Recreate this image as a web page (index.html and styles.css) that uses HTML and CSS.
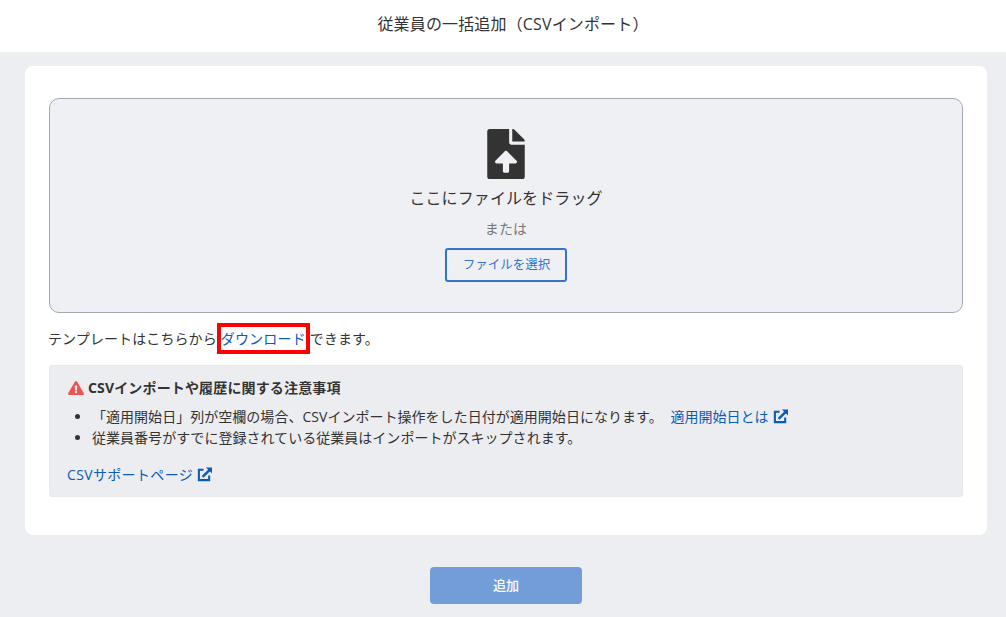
FILE: index.html
```html
<!DOCTYPE html>
<html lang="ja">
<head>
<meta charset="utf-8">
<title>従業員の一括追加（CSVインポート）</title>
<link rel="stylesheet" href="styles.css">
</head>
<body>
<header class="page-header">従業員の一括追加（CSVインポート）</header>
<main class="card">
  <section class="dropzone">
    <svg class="file-icon" viewBox="0 0 384 512" aria-hidden="true"><path fill="#333" d="M224 136V0H24C10.700 0 0 10.700 0 24v464c0 13.300 10.700 24 24 24h336c13.300 0 24-10.700 24-24V160H248c-13.200 0-24-10.800-24-24zm65.180 216.010H224v80c0 8.840-7.160 16-16 16h-32c-8.840 0-16-7.160-16-16v-80H94.820c-14.280 0-21.410-17.290-11.270-27.360l96.420-95.700c6.650-6.610 17.390-6.610 24.040 0l96.420 95.700c10.150 10.070 3.030 27.360-11.250 27.360zM377 105L279.100 7c-4.500-4.500-10.600-7-17-7H256v128h128v-6.100c0-6.300-2.500-12.400-7-16.900z"/></svg>
    <p class="drop-title">ここにファイルをドラッグ</p>
    <p class="drop-or">または</p>
    <button class="select-btn" type="button">ファイルを選択</button>
  </section>
  <p class="template-line">テンプレートはこちらから<a class="link marked" href="#">ダウンロード</a>できます。</p>
  <section class="notice">
    <h2 class="notice-title">
      <svg class="warn-icon" viewBox="0 0 576 512" aria-hidden="true"><path fill="#ef5350" d="M569.500 440L329.400 24c-18.400-32-64.400-32-82.800 0L6.500 440c-18.400 31.900 4.600 72 41.400 72h480.200c36.800 0 59.800-40.100 41.400-72zM288 354c25.400 0 46 20.600 46 46s-20.600 46-46 46-46-20.600-46-46 20.600-46 46-46zm-43.700-165.300c-.7-13.700 10.200-25.300 24-25.300h39.400c13.800 0 24.700 11.600 24 25.300l-7.400 136c-.7 12.700-11.200 22.700-24 22.700h-24.600c-12.800 0-23.300-10-24-22.700z"/></svg>
      CSVインポートや履歴に関する注意事項
    </h2>
    <ul class="notice-list">
      <li>「適用開始日」列が空欄の場合、CSVインポート操作をした日付が適用開始日になります。 <a class="link gap" href="#">適用開始日とは<svg class="ext-icon" viewBox="0 0 16 16" aria-hidden="true"><path fill="none" stroke="currentColor" stroke-width="2.200" d="M7 3H2v11h11V9"/><path fill="none" stroke="currentColor" stroke-width="2.600" d="M6 10.500 14 2.500"/><path fill="currentColor" d="M9.500 0.500H16V7z"/></svg></a></li>
      <li>従業員番号がすでに登録されている従業員はインポートがスキップされます。</li>
    </ul>
    <a class="link support" href="#">CSVサポートページ<svg class="ext-icon" viewBox="0 0 16 16" aria-hidden="true"><path fill="none" stroke="currentColor" stroke-width="2.200" d="M7 3H2v11h11V9"/><path fill="none" stroke="currentColor" stroke-width="2.600" d="M6 10.500 14 2.500"/><path fill="currentColor" d="M9.500 0.500H16V7z"/></svg></a>
  </section>
</main>
<div class="actions"><button class="add-btn" type="button">追加</button></div>
</body>
</html>
```
FILE: styles.css
```css
* { box-sizing: border-box; }
html, body { height: 100%; }
body {
  margin: 0;
  background: #edeef2;
  color: #333;
  font-family: "Open Sans", "Noto Sans CJK JP", sans-serif;
  font-size: 14px;
  line-height: 21px;
  overflow: hidden;
}
.page-header {
  height: 52px;
  background: #fff;
  display: flex;
  align-items: center;
  justify-content: center;
  font-size: 16px;
  letter-spacing: 0.15px;
  padding: 0 0 4px 20px;
}
.card {
  width: 962px;
  height: 469px;
  margin: 14px 0 0 25px;
  padding: 32px 24px 0;
  background: #fff;
  border-radius: 8px;
}
.dropzone {
  height: 215px;
  background: #eff0f4;
  border: 1px solid #a4a8b4;
  border-radius: 10px;
  display: flex;
  flex-direction: column;
  align-items: center;
  padding-top: 30px;
}
.file-icon { width: 38px; height: 50px; display: block; }
.drop-title { margin: 7px 0 0; font-size: 16px; line-height: 24px; letter-spacing: 0.1px; }
.drop-or { margin: 9px 0 0; color: #777; line-height: 20px; letter-spacing: 0.2px; }
.select-btn {
  width: 122px;
  height: 34px;
  margin-top: 9px;
  background: transparent;
  border: 2px solid #3273cd;
  border-radius: 3px;
  color: #3273cd;
  font: inherit;
  font-size: 12.5px;
  padding: 0 0 2px 1px;
}
.template-line {
  margin: 10px 0 0 -1px;
  display: flex;
  align-items: center;
  height: 31px;
  letter-spacing: 0.1px;
  white-space: nowrap;
}
.link { color: #0b5cb5; text-decoration: none; }
.marked {
  display: flex;
  align-items: center;
  justify-content: center;
  width: 93px;
  height: 31px;
  border: 4px solid #f00;
  letter-spacing: 0.2px;
}
.notice {
  height: 132px;
  margin-top: 11px;
  padding: 11px 17px 0;
  background: #ecedf0;
  border: 1px solid #e8e9ec;
  border-radius: 3px;
}
.notice-title {
  margin: 0;
  font-size: 14px;
  line-height: 21px;
  font-weight: 700;
  letter-spacing: 0.15px;
  display: flex;
  align-items: center;
  gap: 4px;
}
.warn-icon { width: 16px; height: 14px; display: block; margin-left: 1px; }
.notice-list { margin: 8px 0 0; padding-left: 25px; line-height: 21px; letter-spacing: 0.03px; }
.gap { margin-left: 4px; }
.ext-icon { width: 15px; height: 15px; margin-left: 4px; vertical-align: -2px; }
.support { display: block; margin-top: 16px; letter-spacing: 0.35px; }
.actions { display: flex; justify-content: center; padding: 32px 0 0 6px; }
.add-btn {
  width: 152px;
  height: 37px;
  background: #739dd8;
  border: 0;
  border-radius: 4px;
  color: #fff;
  font: inherit;
  font-size: 13px;
  font-weight: 500;
}
```
